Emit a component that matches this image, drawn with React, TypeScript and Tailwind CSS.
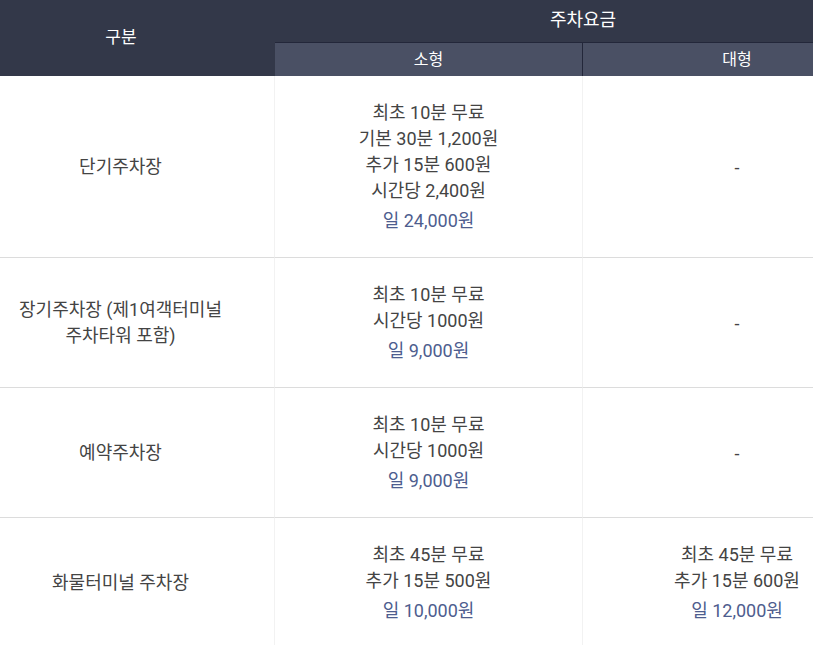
import React from "react";

const font = { fontFamily: "Roboto, 'Noto Sans CJK KR', sans-serif" };

type Row = { name: string[]; small: string[]; smallDay: string; large?: string[]; largeDay?: string };

const rows: Row[] = [
  { name: ["단기주차장"], small: ["최초 10분 무료", "기본 30분 1,200원", "추가 15분 600원", "시간당 2,400원"], smallDay: "일 24,000원" },
  { name: ["장기주차장 (제1여객터미널", "주차타워 포함)"], small: ["최초 10분 무료", "시간당 1000원"], smallDay: "일 9,000원" },
  { name: ["예약주차장"], small: ["최초 10분 무료", "시간당 1000원"], smallDay: "일 9,000원" },
  { name: ["화물터미널 주차장"], small: ["최초 45분 무료", "추가 15분 500원"], smallDay: "일 10,000원", large: ["최초 45분 무료", "추가 15분 600원"], largeDay: "일 12,000원" },
];

function Cell({ lines, day }: { lines: string[]; day: string }) {
  return (
    <div className="flex flex-col items-center">
      {lines.map((l) => (
        <div key={l} className="leading-[26px]">{l}</div>
      ))}
      <div className="leading-[26px] mt-[4px] text-[#4e5d8e]">{day}</div>
    </div>
  );
}

export default function App() {
  return (
    <div className="w-[813px] h-[645px] overflow-hidden bg-white text-[#444] text-[18px]" style={font}>
      <div className="ml-[-33px] w-[924px] grid grid-cols-[308px_308px_308px]">
        <div className="row-span-2 bg-[#333849] text-white text-[17px] flex items-center justify-center">구분</div>
        <div className="col-span-2 h-[43px] bg-[#333849] border-b border-[#23273a] text-white text-[18px] flex items-center justify-center pb-[4px]">주차요금</div>
        <div className="h-[33px] bg-[#4a5064] text-white text-[16px] flex items-center justify-center border-r border-[#23273a]">소형</div>
        <div className="h-[33px] bg-[#4a5064] text-white text-[16px] flex items-center justify-center">대형</div>
        {rows.map((r, i) => (
          <React.Fragment key={i}>
            <div className="border-b border-r border-b-[#dcdcdc] border-r-[#f2f2f2] flex flex-col items-center justify-center pt-[24px] pb-[23px]">
              {r.name.map((n) => (
                <div key={n} className="leading-[26px]">{n}</div>
              ))}
            </div>
            <div className="border-b border-r border-b-[#dcdcdc] border-r-[#f2f2f2] flex items-center justify-center pt-[24px] pb-[23px]">
              <Cell lines={r.small} day={r.smallDay} />
            </div>
            <div className="border-b border-b-[#dcdcdc] flex items-center justify-center pt-[24px] pb-[23px]">
              {r.large ? <Cell lines={r.large} day={r.largeDay!} /> : <span>-</span>}
            </div>
          </React.Fragment>
        ))}
      </div>
    </div>
  );
}
